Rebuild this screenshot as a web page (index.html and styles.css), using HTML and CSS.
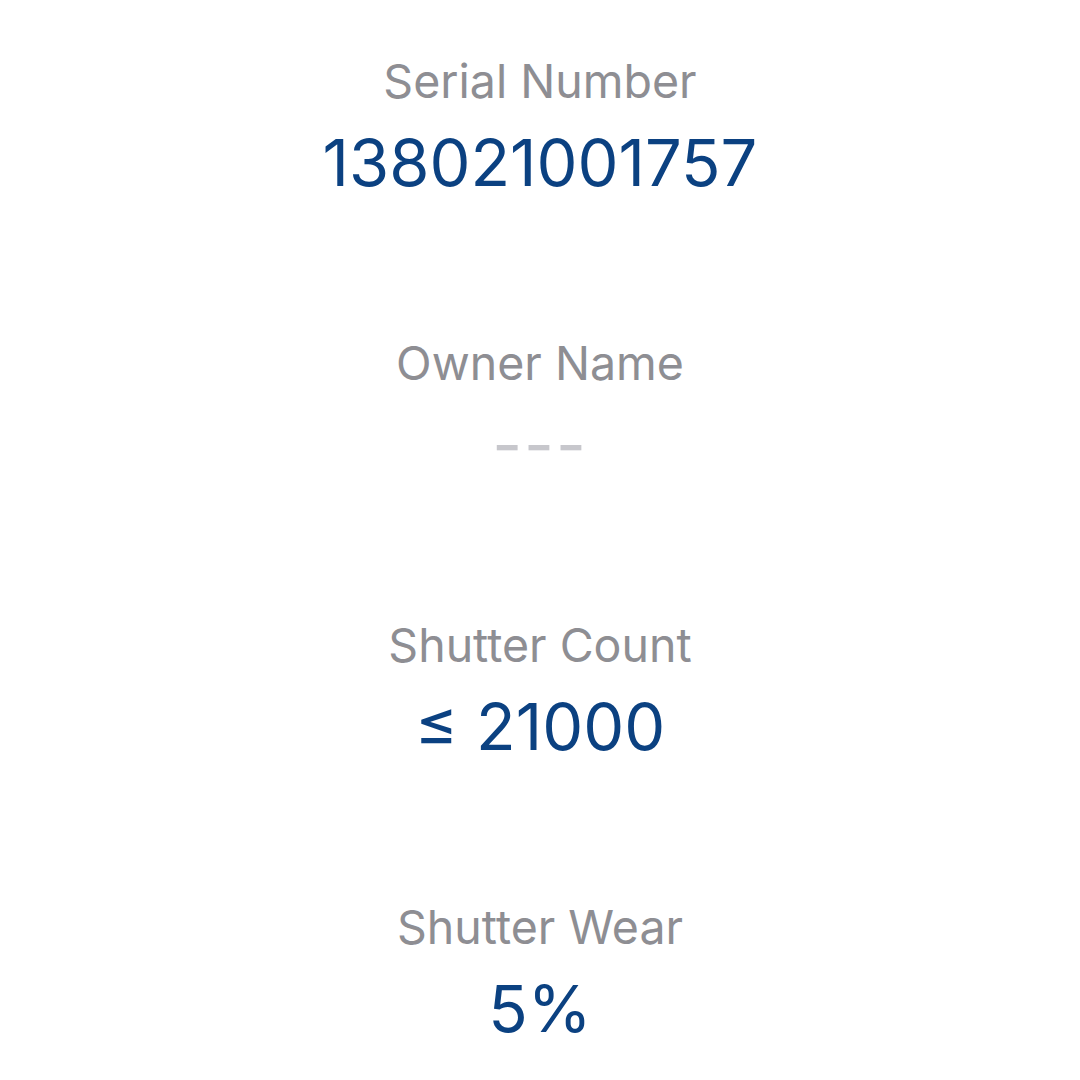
FILE: index.html
```html
<!DOCTYPE html>
<html lang="en">
<head>
  <meta charset="UTF-8" />
  <meta name="viewport" content="width=device-width, initial-scale=1.0" />
  <title>Camera Info</title>
  <link rel="stylesheet" href="styles.css">
</head>
<body>
  <div class="info-list">
    <div class="info-item">
      <div class="label">Serial Number</div>
      <div class="value">138021001757</div>
    </div>
    <div class="info-item">
      <div class="label">Owner Name</div>
      <div class="value empty">---</div>
    </div>
    <div class="info-item">
      <div class="label">Shutter Count</div>
      <div class="value">≤ 21000</div>
    </div>
    <div class="info-item">
      <div class="label">Shutter Wear</div>
      <div class="value">5%</div>
    </div>
  </div>
</body>
</html>
```

FILE: styles.css
```css
* {
  box-sizing: border-box;
  margin: 0;
  padding: 0;
}

body {
  background: #ffffff;
  font-family: 'Inter', 'Liberation Sans', sans-serif;
  min-height: 100vh;
}

.info-list {
  display: flex;
  flex-direction: column;
  align-items: center;
  gap: 132px;
  padding-top: 53px;
}

.info-item {
  display: flex;
  flex-direction: column;
  align-items: center;
  gap: 14px;
}

.label {
  font-size: 46.5px;
  line-height: 56px;
  color: #8e8e93;
}

.value {
  font-size: 65px;
  line-height: 80px;
  color: #0b4181;
}

.value.empty {
  color: #c7c7cc;
  letter-spacing: 2px;
}
```
